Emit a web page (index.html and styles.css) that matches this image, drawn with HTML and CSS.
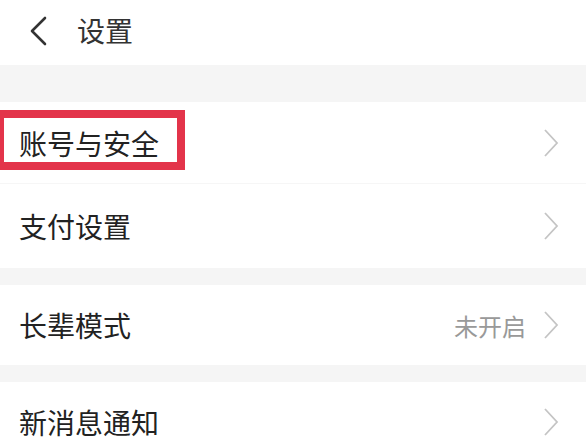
FILE: index.html
```html
<!DOCTYPE html>
<html lang="zh-CN">
<head>
    <meta charset="UTF-8">
    <title>设置</title>
    <link rel="stylesheet" href="styles.css">
</head>
<body>
    <header class="topbar">
        <svg class="back" width="20" height="30" viewBox="0 0 20 30">
            <path d="M17 2 L4 15 L17 28" fill="none" stroke="#333" stroke-width="2.6" stroke-linecap="round" stroke-linejoin="round"/>
        </svg>
        <h1 class="title">设置</h1>
    </header>

    <div class="gap gap-top"></div>

    <section class="group">
        <div class="row row-first">
            <span class="label">账号与安全</span>
            <span class="arrow"><svg width="16" height="28" viewBox="0 0 16 28"><path d="M2 1 L14 14 L2 27" fill="none" stroke="#c4c4c4" stroke-width="1.8"/></svg></span>
            <div class="highlight"></div>
        </div>
        <div class="row row-second">
            <span class="label">支付设置</span>
            <span class="arrow"><svg width="16" height="28" viewBox="0 0 16 28"><path d="M2 1 L14 14 L2 27" fill="none" stroke="#c4c4c4" stroke-width="1.8"/></svg></span>
        </div>
    </section>

    <div class="gap"></div>

    <section class="group">
        <div class="row row-mid">
            <span class="label">长辈模式</span>
            <span class="value">未开启</span>
            <span class="arrow"><svg width="16" height="28" viewBox="0 0 16 28"><path d="M2 1 L14 14 L2 27" fill="none" stroke="#c4c4c4" stroke-width="1.8"/></svg></span>
        </div>
    </section>

    <div class="gap"></div>

    <section class="group">
        <div class="row row-mid">
            <span class="label">新消息通知</span>
            <span class="arrow"><svg width="16" height="28" viewBox="0 0 16 28"><path d="M2 1 L14 14 L2 27" fill="none" stroke="#c4c4c4" stroke-width="1.8"/></svg></span>
        </div>
    </section>
</body>
</html>
```

FILE: styles.css
```css
* {
    margin: 0;
    padding: 0;
    box-sizing: border-box;
}

body {
    background: #fff;
    font-family: "Noto Sans CJK SC", "Noto Sans", sans-serif;
    color: #222;
    overflow: hidden;
}

.topbar {
    height: 65px;
    display: flex;
    align-items: center;
    padding-left: 28px;
    background: #fff;
}

.back {
    display: block;
    margin-top: -3px;
}

.title {
    font-size: 28px;
    font-weight: 400;
    color: #333;
    margin-left: 29px;
    margin-top: -6px;
}

.gap {
    height: 17px;
    background: #f5f5f5;
}

.gap-top {
    height: 37px;
}

.group {
    background: #fff;
}

.row {
    position: relative;
    display: flex;
    align-items: center;
    height: 80px;
    padding: 0 27px 0 19px;
}

.row-first {
    height: 82px;
    border-bottom: 1px solid #f6f6f6;
}

.row-second {
    height: 84px;
}

.label {
    flex: 1;
    font-size: 28px;
    line-height: 1;
    color: #222;
}

.value {
    font-size: 24px;
    color: #999;
    margin-right: 17px;
}

.arrow {
    display: flex;
}

.highlight {
    position: absolute;
    left: -4px;
    top: 8px;
    width: 189px;
    height: 60px;
    border: 8px solid #e3344a;
}
```
